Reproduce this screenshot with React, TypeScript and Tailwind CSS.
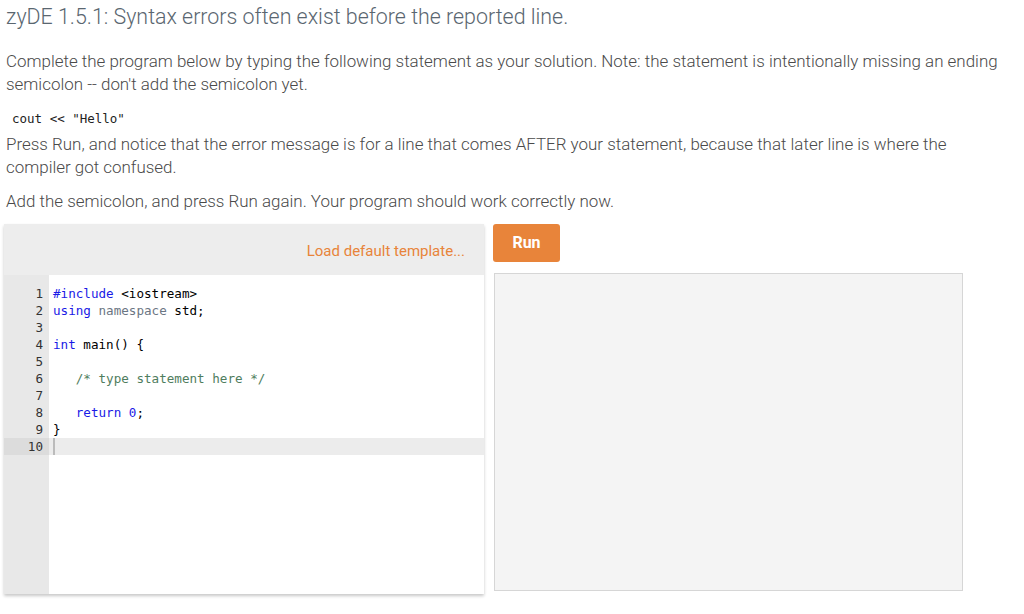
import type { ReactNode } from "react";

type Tok = { t: string; c?: string };

const kw = "text-[#1a1ae6]";
const ns = "text-[#6b7683]";
const cm = "text-[#4f7d5e]";

const lines: Tok[][] = [
  [{ t: "#include", c: kw }, { t: " <iostream>" }],
  [{ t: "using", c: kw }, { t: " " }, { t: "namespace", c: ns }, { t: " std;" }],
  [],
  [{ t: "int", c: kw }, { t: " main() {" }],
  [],
  [{ t: "   " }, { t: "/* type statement here */", c: cm }],
  [],
  [{ t: "   " }, { t: "return", c: kw }, { t: " " }, { t: "0", c: kw }, { t: ";" }],
  [{ t: "}" }],
  [],
];

function CodeLine({ n, toks, active }: { n: number; toks: Tok[]; active: boolean }) {
  return (
    <div className={active ? "flex h-[17px] bg-[#ececec]" : "flex h-[17px]"}>
      <div
        className={
          "w-[45px] shrink-0 pr-[6px] text-right text-[#333] " + (active ? "bg-[#dcdcdc]" : "bg-[#e8e8e8]")
        }
      >
        {n}
      </div>
      <div className="relative flex-1 whitespace-pre pl-[4px] text-black">
        {toks.map((tk, i) => (
          <span key={i} className={tk.c}>
            {tk.t}
          </span>
        ))}
        {active && <span className="absolute left-[4px] top-0 h-[17px] w-[2px] bg-[#bbb]" />}
      </div>
    </div>
  );
}

function P({ children, className }: { children: ReactNode; className?: string }) {
  return (
    <p className={"text-[16.95px] font-light leading-[23px] text-[#4a4a4a] " + (className ?? "")}>{children}</p>
  );
}

export default function App() {
  return (
    <div className="h-[614px] w-[1024px] overflow-hidden bg-white font-['Roboto',sans-serif]">
      <div className="pl-[6px] pr-[16px]">
        <h1 className="pt-[3px] text-[21.4px] font-light leading-[28px] text-[#5a6670]">
          zyDE 1.5.1: Syntax errors often exist before the reported line.
        </h1>
        <P className="mt-[19px]">
          Complete the program below by typing the following statement as your solution. Note: the statement is
          intentionally missing an ending semicolon -- don't add the semicolon yet.
        </P>
        <pre className="mt-[15px] pl-[6px] font-['DejaVu_Sans_Mono',monospace] text-[12.5px] leading-[16px] text-[#222]">
          cout &lt;&lt; "Hello"
        </pre>
        <P className="mt-[6px]">
          Press Run, and notice that the error message is for a line that comes AFTER your statement, because that
          later line is where the compiler got confused.
        </P>
        <P className="mt-[11px]">Add the semicolon, and press Run again. Your program should work correctly now.</P>
      </div>

      <div className="mt-[11px] flex pl-[4px]">
        <div className="flex h-[370px] w-[480px] flex-col bg-white shadow-[0_2px_3px_rgba(0,0,0,0.22)]">
          <div className="flex h-[51px] items-center justify-end bg-[#ededed] pr-[19px] pt-[3px]">
            <span className="text-[15px] text-[#e8843a]">Load default template...</span>
          </div>
          <div className="flex flex-1 flex-col">
            <div className="h-[10px] w-[45px] bg-[#e8e8e8]" />
            <div className="font-['DejaVu_Sans_Mono',monospace] text-[12.6px] leading-[17px]">
              {lines.map((toks, i) => (
                <CodeLine key={i} n={i + 1} toks={toks} active={i === 9} />
              ))}
            </div>
            <div className="w-[45px] flex-1 bg-[#e8e8e8]" />
          </div>
        </div>

        <div className="ml-[9px] flex flex-col">
          <button
            type="button"
            className="h-[38px] w-[67px] rounded-[3px] bg-[#e8843a] text-[16px] font-bold text-white"
          >
            Run
          </button>
          <div className="ml-px mt-[11px] h-[318px] w-[469px] border border-[#d6d6d6] bg-[#f4f4f4]" />
        </div>
      </div>
    </div>
  );
}
